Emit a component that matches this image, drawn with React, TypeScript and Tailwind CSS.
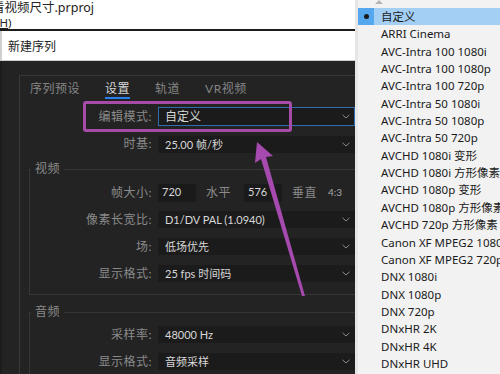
import React from "react";

const presets = [
  "自定义",
  "ARRI Cinema",
  "AVC-Intra 100 1080i",
  "AVC-Intra 100 1080p",
  "AVC-Intra 100 720p",
  "AVC-Intra 50 1080i",
  "AVC-Intra 50 1080p",
  "AVC-Intra 50 720p",
  "AVCHD 1080i 变形",
  "AVCHD 1080i 方形像素",
  "AVCHD 1080p 变形",
  "AVCHD 1080p 方形像素",
  "AVCHD 720p 方形像素",
  "Canon XF MPEG2 1080i",
  "Canon XF MPEG2 720p",
  "DNX 1080i",
  "DNX 1080p",
  "DNX 720p",
  "DNxHR 2K",
  "DNxHR 4K",
  "DNxHR UHD",
];

function Chevron() {
  return (
    <svg width="8" height="5" viewBox="0 0 8 5" className="shrink-0">
      <path d="M0.5 0.8 L4 4 L7.5 0.8" fill="none" stroke="#8a8a8a" strokeWidth="1" />
    </svg>
  );
}

function Select({ value, focused }: { value: string; focused?: boolean }) {
  return (
    <div
      className={
        focused
          ? "w-[197px] h-[19px] flex items-center justify-between pl-[6px] pr-[4px] bg-[#1b1b1b] border border-[#2f6db0] text-[12px] text-[#d8d8d8]"
          : "w-[197px] h-[17px] flex items-center justify-between pl-[7px] pr-[5px] bg-[#1b1b1b] text-[11px] text-[#d8d8d8]"
      }
    >
      <span className="leading-none">{value}</span>
      <Chevron />
    </div>
  );
}

function Row({
  label,
  inGroup,
  tall,
  children,
}: {
  label: string;
  inGroup?: boolean;
  tall?: boolean;
  children: React.ReactNode;
}) {
  return (
    <div className={tall ? "flex items-center h-[28px]" : "flex items-center h-[27px]"}>
      <div
        className={
          inGroup
            ? "w-[128px] shrink-0 text-right pr-[6px] text-[12px] tracking-[0.5px] text-[#8a8a8a]"
            : "w-[138px] shrink-0 text-right pr-[6px] text-[12px] tracking-[0.5px] text-[#8a8a8a]"
        }
      >
        {label}
      </div>
      {children}
    </div>
  );
}

function Group({ title, children }: { title: string; children: React.ReactNode }) {
  return (
    <fieldset className="ml-[9px] min-w-0 border-l border-t border-b border-[#363636]">
      <legend className="ml-[1px] px-[4px] text-[12px] leading-[16px] tracking-[0.5px] text-[#8a8a8a]">
        {title}
      </legend>
      {children}
    </fieldset>
  );
}

export default function App() {
  return (
    <div className="w-[500px] h-[374px] flex overflow-hidden bg-white font-['Lato','Noto_Sans_CJK_SC',sans-serif]">
      {/* left: premiere window + dialog */}
      <div className="w-[355px] shrink-0 flex flex-col relative">
        <div className="h-[29px] bg-white text-[#222] overflow-hidden font-['Noto_Sans','Noto_Sans_CJK_SC',sans-serif]">
          <div className="h-[16px] -ml-[8px] text-[12.5px] leading-[15px] whitespace-nowrap">看视频尺寸.prproj</div>
          <div className="h-[13px] -ml-[4px] text-[11.5px] leading-[13px] whitespace-nowrap">
            (<span className="underline">H</span>)
          </div>
        </div>
        <div className="h-[2px] bg-[#1c1c1c]" />
        <div className="h-[30px] bg-white border-l-2 border-b border-[#cfcfcf] flex items-center pl-[6px] text-[12px] text-[#222] font-['Noto_Sans_CJK_SC',sans-serif]">
          新建序列
        </div>

        {/* dialog body */}
        <div className="flex-1 bg-[#232323] pt-[14px] pl-[17px] overflow-hidden border-l-2 border-[#1d1d1d]">
          <div className="h-full border-l border-t border-[#383838]">
            {/* tabs */}
            <div className="flex h-[25px] pl-[10px] gap-[25px] text-[12px] tracking-[0.5px]">
              {["序列预设", "设置", "轨道", "VR视频"].map((t) => (
                <div key={t} className="flex flex-col items-center pt-[4px]">
                  <span className={t === "设置" ? "leading-[17px] text-[#d6d6d6]" : "leading-[17px] text-[#858585]"}>
                    {t}
                  </span>
                  <div className={t === "设置" ? "h-[2px] w-full bg-[#2680eb]" : "h-[2px] w-full"} />
                </div>
              ))}
            </div>

            <div className="mt-[2px]">
              <Row label="编辑模式:">
                <Select value="自定义" focused />
              </Row>
              <Row label="时基:" tall>
                <Select value="25.00  帧/秒" />
              </Row>
            </div>

            <div className="mt-[3px]">
              <Group title="视频">
                <div className="pt-[2px] pb-[7px]">
                  <Row label="帧大小:" inGroup>
                    <div className="w-[38px] h-[18px] bg-[#1a1a1a] pl-[4px] flex items-center text-[11px] text-[#d8d8d8]">720</div>
                    <span className="ml-[10px] text-[12px] tracking-[0.5px] text-[#8a8a8a]">水平</span>
                    <div className="ml-[13px] w-[38px] h-[18px] bg-[#1a1a1a] pl-[4px] flex items-center text-[11px] text-[#d8d8d8]">576</div>
                    <span className="ml-[10px] text-[12px] tracking-[0.5px] text-[#8a8a8a]">垂直</span>
                    <span className="ml-[11px] text-[10px] text-[#a8a8a8]">4:3</span>
                  </Row>
                  <Row label="像素长宽比:" inGroup>
                    <Select value="D1/DV PAL (1.0940)" />
                  </Row>
                  <Row label="场:" inGroup>
                    <Select value="低场优先" />
                  </Row>
                  <Row label="显示格式:" inGroup>
                    <Select value="25 fps 时间码" />
                  </Row>
                </div>
              </Group>
            </div>

            <div className="mt-[9px]">
              <Group title="音频">
                <div className="pt-[1px]">
                  <Row label="采样率:" inGroup>
                    <Select value="48000 Hz" />
                  </Row>
                  <Row label="显示格式:" inGroup>
                    <Select value="音频采样" />
                  </Row>
                </div>
              </Group>
            </div>
          </div>
        </div>

        {/* annotation: highlight box + arrow */}
        <div className="absolute left-[83px] top-[101px] w-[209px] h-[31px] border-[3px] border-[#a64ca8] rounded-[3px] pointer-events-none" />
        <svg className="absolute left-0 top-0 pointer-events-none" width="355" height="374" viewBox="0 0 355 374">
          <polygon
            points="257,142 273,156 266,157 305,296 302,296 261,159 255,163"
            fill="#a64ab0"
          />
        </svg>
      </div>

      {/* right: preset dropdown list */}
      <div className="w-[3px] shrink-0 bg-[#e6e6e6]" />
      <div className="flex-1 min-w-0 bg-[#f2f2f2] flex flex-col font-['Noto_Sans','Noto_Sans_CJK_SC',sans-serif] text-[11.5px] text-[#1a1a1a]">
        <div className="h-[8px] pl-[17px]">
          <svg width="8" height="4" viewBox="0 0 8 4">
            <polygon points="0,4 4,0 8,4" fill="#b5b5b5" />
          </svg>
        </div>
        {presets.map((p, i) => (
          <div key={p} className="h-[17.35px] flex shrink-0">
            <div className={i === 0 ? "w-[16px] shrink-0 bg-[#55a7ee] flex items-center justify-center" : "w-[16px] shrink-0"}>
              {i === 0 && <div className="w-[5px] h-[5px] rounded-full bg-[#1a1a1a]" />}
            </div>
            <div className={i === 0 ? "flex-1 bg-[#a3cff5] pl-[7px] flex items-center whitespace-nowrap overflow-hidden" : "flex-1 pl-[7px] flex items-center whitespace-nowrap overflow-hidden"}>
              {p}
            </div>
          </div>
        ))}
      </div>
    </div>
  );
}
